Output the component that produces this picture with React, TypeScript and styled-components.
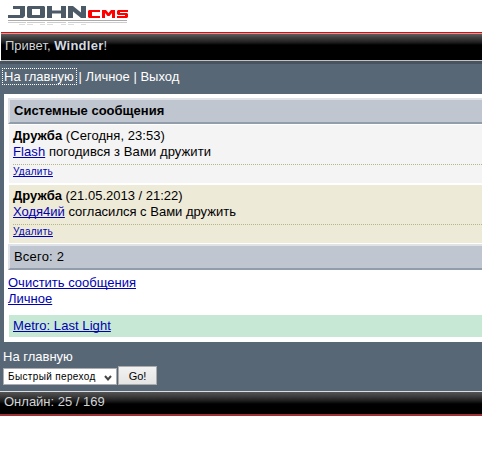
import React from "react";
import styled, { createGlobalStyle } from "styled-components";

const Global = createGlobalStyle`
  * { box-sizing: border-box; }
  body { margin: 0; background: #fff; }
`;
const Page = styled.div`
  width: 482px; height: 450px; overflow: hidden; background: #fff; color: #000;
  font: 13px/16px "Liberation Sans", Arial, sans-serif;
`;
const Header = styled.header`
  height: 32px; padding: 5px 0 0 8px;
  svg { display: block; }
`;
const Greeting = styled.div`
  height: 29px; margin-left: 1px; padding: 5px 0 0 4px;
  border-top: 1px solid #f00; border-bottom: 1px solid #c3c3c3;
  box-shadow: inset 0 1px #aaa;
  background: linear-gradient(#666 0, #444 4px, #222 9px, #0c0c0c 11px, #000 12px);
  color: #d0d4d8;
  b { color: #d3dbe3; letter-spacing: 0.25px; }
`;
const TopNav = styled.nav`
  height: 33px; padding: 5px 0 0 3px; border-top: 3px solid #47535f;
  background: #586776; color: #fff; display: flex; align-items: flex-start; white-space: pre;
`;
const NavLink = styled.a`
  width: 75px; height: 17px; margin: -1px -2px 0 -1px; padding-left: 1px;
  border: 1px dotted #fff; color: #fff; line-height: 16px;
`;
const Frame = styled.div`background: #586776; padding-left: 4px;`;
const Main = styled.main`height: 248px; padding: 4px 0 0 4px; background: #fff;`;
const Bar = styled.div<{ $kind: "title" | "total" }>`
  height: 26px; padding: 3px 0 0 4px; background: #bfc6d0;
  border: solid; border-width: 2px 0 2px 2px; border-color: #dfe2e7 #dfe2e7 #929dab #dfe2e7;
  font-weight: ${p => (p.$kind === "title" ? 700 : 400)};
  margin-top: ${p => (p.$kind === "title" ? 0 : "1px")};
  letter-spacing: ${p => (p.$kind === "title" ? 0 : "0.2px")};
`;
const Message = styled.article<{ $tone: string }>`
  height: 58px; margin: 1px 0 0 1px; padding: 3px 0 0 4px; background: ${p => p.$tone};
  & + & { margin-top: 2px; }
`;
const Line = styled.div<{ $spacing?: number }>`letter-spacing: ${p => p.$spacing ?? 0}px;`;
const Actions = styled.div`
  margin-top: 4px; border-top: 1px dotted #b4b78a; font-size: 10px; line-height: 14px; letter-spacing: 0.25px;
`;
const Link = styled.a`
  color: #0000b0; text-decoration: underline; text-decoration-thickness: 1px;
  text-underline-offset: 1px; text-decoration-skip-ink: none;
`;
const Links = styled.div`padding-top: 5px; display: flex; flex-direction: column; align-items: flex-start;`;
const Promo = styled.div`
  margin: 8px 0 0 1px; height: 22px; padding: 3px 4px; background: #c7e8d5; letter-spacing: 0.06px;
`;
const Footer = styled.footer`height: 49px; padding: 7px 0 0 3px; background: #586776; color: #fff;`;
const Jump = styled.div`display: flex; align-items: center; height: 20px; margin-top: 1px;`;
const Select = styled.div`
  width: 114px; height: 17px; padding: 1px 4px 0; display: flex; align-items: center; justify-content: space-between;
  border: 1px solid #abadb3; background: #fff; color: #000; font-size: 10px; letter-spacing: 0.35px;
  svg { margin-top: 4px; }
`;
const Go = styled.button`
  width: 39px; height: 19px; margin: -1px 0 0 1px; padding: 0; border: 1px solid #acacac;
  background: linear-gradient(#f2f2f2, #e4e4e4); color: #000; font: 11px "Liberation Sans", Arial, sans-serif;
`;
const Online = styled.div`
  height: 25px; padding: 2px 4px; border-top: 1px solid #dadde2; border-bottom: 2px solid #9b3035;
  background: linear-gradient(#555 0, #383838 5px, #1c1c1c 9px, #0a0a0a 11px, #000 12px);
  color: #d0d4d8;
`;

function Logo() {
  return (
    <svg width="122" height="22" viewBox="0 0 122 22">
      <g fill="#4c5a68" fillRule="evenodd">
        <path d="M5 1H17V11L15 13H0V10H12V4H5Z" />
        <path d="M20 1H36L37 2V12L36 13H20L19 12V2ZM24 4V10H32V4Z" />
        <path d="M39 1H44V5.500H53V1H58V13H53V8.500H44V13H39Z" />
        <path d="M60 1H65L73 7.500V1H78V13H73L65 6.500V13H60Z" />
      </g>
      <g fill="#f00">
        <path d="M81 5H92V7H84V11H92V13H81L80 12V6Z" />
        <path d="M94 5H98L100.500 8L103 5H107V13H104V8L101.500 11H99.500L97 8V13H94Z" />
        <path d="M110 5H120V7H112V8H119L120 9V12L119 13H109V11H117V10H110L109 9V6Z" />
      </g>
      <g fill="none" shapeRendering="crispEdges">
        <path d="M0 15.500H119" stroke="#aaa" />
        <path d="M0 17.500H18M19 17.500H37M39 17.500H58M60 17.500H119" stroke="#ccc" />
        <path d="M11 19.500H17M19 19.500H25M32 19.500H37M39 19.500H45M53 19.500H58M60 19.500H66M73 19.500H78" stroke="#ddd" />
      </g>
    </svg>
  );
}

export default function App() {
  return (
    <Page>
      <Global />
      <Header><Logo /></Header>
      <Greeting>Привет, <b>Windler</b>!</Greeting>
      <TopNav><NavLink>На главную</NavLink> | Личное | Выход</TopNav>
      <Frame>
        <Main>
          <Bar $kind="title">Системные сообщения</Bar>
          <Message $tone="#f4f4f4">
            <Line $spacing={0.05}><b>Дружба</b> (Сегодня, 23:53)</Line>
            <Line $spacing={0.08}><Link>Flash</Link> погодився з Вами дружити</Line>
            <Actions><Link>Удалить</Link></Actions>
          </Message>
          <Message $tone="#eeead8">
            <Line><b>Дружба</b> (21.05.2013 / 21:22)</Line>
            <Line><Link>Ходя4ий</Link> согласился с Вами дружить</Line>
            <Actions><Link>Удалить</Link></Actions>
          </Message>
          <Bar $kind="total">Всего: 2</Bar>
          <Links><Link>Очистить сообщения</Link><Link>Личное</Link></Links>
          <Promo><Link>Metro: Last Light</Link></Promo>
        </Main>
      </Frame>
      <Footer>
        <div>На главную</div>
        <Jump>
          <Select>Быстрый переход
            <svg width="8" height="7" viewBox="0 0 8 7"><path d="M1 1L4 4.500L7 1" fill="none" stroke="#444" strokeWidth="2" /></svg>
          </Select>
          <Go>Go!</Go>
        </Jump>
      </Footer>
      <Online>Онлайн: 25 / 169</Online>
    </Page>
  );
}
